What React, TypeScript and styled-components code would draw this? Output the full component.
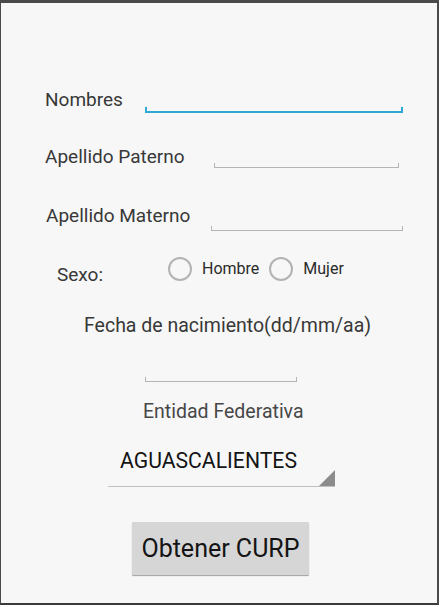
import React from 'react'
import styled, { createGlobalStyle } from 'styled-components'

const GlobalStyle = createGlobalStyle`
  body {
    margin: 0;
    background: #ffffff;
    font-family: Roboto, "Liberation Sans", sans-serif;
  }
`

const Frame = styled.div`
  box-sizing: border-box;
  width: 439px;
  height: 605px;
  background: #f7f7f7;
  border-top: 3px solid #4a4a4a;
  border-left: 1px solid #4a4a4a;
  border-right: 2px solid #4a4a4a;
  border-bottom: 2px solid #3a3a3a;
  display: flex;
  flex-direction: column;
`

const FieldRow = styled.div<{ $top: number; $left: number }>`
  display: flex;
  align-items: flex-end;
  height: 40px;
  margin-top: ${p => p.$top}px;
  padding-left: ${p => p.$left}px;
`

const Label = styled.span<{ $width?: number; $lift?: number }>`
  display: block;
  flex: none;
  width: ${p => (p.$width ? `${p.$width}px` : 'auto')};
  margin-bottom: ${p => p.$lift ?? 0}px;
  font-size: 19px;
  line-height: 22px;
  color: #383838;
  white-space: nowrap;
`

const Underline = styled.div<{ $width: number; $active?: boolean }>`
  box-sizing: border-box;
  flex: none;
  width: ${p => p.$width}px;
  height: ${p => (p.$active ? 6 : 5)}px;
  border: 0 solid ${p => (p.$active ? '#2fa8d5' : '#b4b4b4')};
  border-bottom-width: ${p => (p.$active ? 2 : 1)}px;
  border-left-width: ${p => (p.$active ? 2 : 1)}px;
  border-right-width: ${p => (p.$active ? 2 : 1)}px;
`

const SexRow = styled.div`
  display: flex;
  align-items: flex-start;
  margin-top: 26px;
  padding-left: 56px;
`

const SexLabel = styled(Label)`
  margin-top: 7px;
`

const RadioOption = styled.label`
  display: flex;
  align-items: center;
  gap: 10px;
  margin-right: 10px;
  font-size: 16px;
  line-height: 24px;
  color: #2a2a2a;
`

const RadioCircle = styled.span`
  box-sizing: border-box;
  width: 24px;
  height: 24px;
  border-radius: 50%;
  border: 2px solid #b3b3b3;
`

const TextLine = styled.div<{ $top: number; $left: number; $color?: string }>`
  margin-top: ${p => p.$top}px;
  padding-left: ${p => p.$left}px;
  font-size: 19.5px;
  line-height: 22px;
  color: ${p => p.$color ?? '#383838'};
  white-space: nowrap;
`

const DateField = styled(Underline)`
  margin-top: 40px;
  margin-left: 144px;
`

const Spinner = styled.div`
  box-sizing: content-box;
  display: flex;
  width: 215px;
  height: 37px;
  margin-top: 17px;
  margin-left: 107px;
  padding: 9px 0 0 12px;
  border-bottom: 1px solid #c0c0c0;
`

const SpinnerText = styled.span`
  flex: 1;
  font-size: 21.2px;
  line-height: 24px;
  color: #141414;
`

const Corner = styled.span`
  align-self: flex-end;
  width: 0;
  height: 0;
  border-left: 16px solid transparent;
  border-bottom: 16px solid #8c8c8c;
`

const ActionButton = styled.button`
  width: 177px;
  height: 53px;
  margin-top: 35px;
  margin-left: 131px;
  padding: 0;
  border: none;
  border-radius: 1px;
  background: #d6d6d6;
  box-shadow: 0 1px 1px rgba(0, 0, 0, 0.35);
  font-family: Roboto, "Liberation Sans", sans-serif;
  font-size: 25px;
  line-height: 30px;
  color: #141414;
`

const App: React.FC = () => {
  return (
    <>
      <GlobalStyle />
      <Frame>
        <FieldRow $top={70} $left={44}>
          <Label $width={100} $lift={2}>Nombres</Label>
          <Underline $width={258} $active />
        </FieldRow>
        <FieldRow $top={15} $left={44}>
          <Label $width={169}>Apellido Paterno</Label>
          <Underline $width={185} />
        </FieldRow>
        <FieldRow $top={23} $left={45}>
          <Label $width={165} $lift={4}>Apellido Materno</Label>
          <Underline $width={192} />
        </FieldRow>
        <SexRow>
          <SexLabel $width={111}>Sexo:</SexLabel>
          <RadioOption>
            <RadioCircle />
            Hombre
          </RadioOption>
          <RadioOption>
            <RadioCircle />
            Mujer
          </RadioOption>
        </SexRow>
        <TextLine $top={29} $left={83}>Fecha de nacimiento(dd/mm/aa)</TextLine>
        <DateField $width={152} />
        <TextLine $top={19} $left={142} $color="#474747">Entidad Federativa</TextLine>
        <Spinner>
          <SpinnerText>AGUASCALIENTES</SpinnerText>
          <Corner />
        </Spinner>
        <ActionButton>Obtener CURP</ActionButton>
      </Frame>
    </>
  )
}

export default App
